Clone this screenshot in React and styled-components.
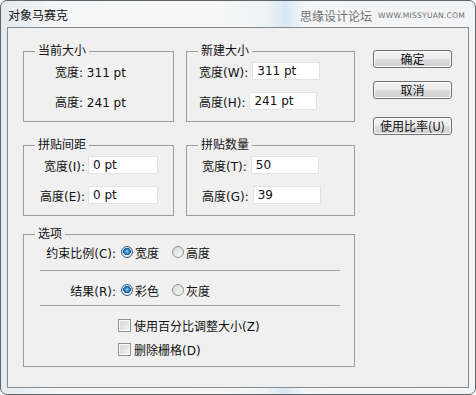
import styled, { createGlobalStyle } from "styled-components"

const Global = createGlobalStyle`
html, body {
    margin:0;
    padding:0;
    background:#ffffff;
}
body {
    font-family: "DejaVu Sans", "Noto Sans CJK SC", sans-serif;
    font-size:12px;
    color:#111;
}
* { box-sizing:border-box; }
`

const Window = styled.div`
width:476px;
height:395px;
border:1px solid #5f6469;
border-radius:7px;
padding:0 6px 6px;
display:flex;
flex-direction:column;
background: linear-gradient(90deg, #e3ebf1 0%, #f5f6f7 12%, #f7f7f7 45%, #eef2f4 56%, #d7e9f6 60%, #f3f5f6 64%, #f1f3f5 100%);
`

const TitleBar = styled.div`
height:26px;
display:flex;
align-items:center;
justify-content:space-between;
padding:0 4px 0 1px;
`

const Title = styled.span`
font-family:"Noto Sans CJK SC", sans-serif;
font-size:12px;
color:#111;
`

const Watermark = styled.div`
display:flex;
align-items:center;
gap:6px;
padding-top:3px;
color:#707070;
`

const WatermarkCn = styled.span`
font-family:"Noto Sans CJK SC", sans-serif;
font-size:12px;
`

const WatermarkEn = styled.span`
font-family:"DejaVu Sans", sans-serif;
font-size:7.6px;
letter-spacing:0.2px;
`

const Client = styled.div`
flex:1;
border:1px solid #85898c;
background:#f0f0f0;
display:flex;
gap:18px;
padding:16px 15px 16px 15px;
`

const Main = styled.div`
width:332px;
display:flex;
flex-direction:column;
gap:11px;
`

const Grid = styled.div`
display:grid;
grid-template-columns:151px 169px;
column-gap:12px;
row-gap:16px;
`

const Group = styled.fieldset`
margin:0;
padding:0;
min-width:0;
border:1px solid #9c9c9c;
`

const Legend = styled.legend`
margin-left:11px;
padding:0 3px;
line-height:14px;
font-size:12px;
`

const GroupBody = styled.div`
display:flex;
flex-direction:column;
gap:10px;
padding:3px 10px 10px ${p => p.$indent}px;
`

const Row = styled.div`
height:20px;
display:flex;
align-items:center;
gap:${p => p.$gap ?? 4}px;
`

const Label = styled.span`
white-space:nowrap;
${p => p.$width && `width:${p.$width}px; text-align:right;`}
`

const Field = styled.input`
width:${p => p.$width}px;
height:18px;
border:1px solid #e2e3e4;
background:#fff;
padding:0 4px;
font-family:"DejaVu Sans", "Noto Sans CJK SC", sans-serif;
font-size:12px;
color:#111;
outline:none;
`

const OptionsBody = styled.div`
display:flex;
flex-direction:column;
padding:1px 14px 7px 14px;
`

const Separator = styled.div`
height:1px;
background:#a3a3a3;
margin:${p => p.$margin};
`

const Choice = styled.label`
display:flex;
align-items:center;
gap:2px;
margin-left:${p => p.$offset}px;
`

const Radio = styled.span`
width:12px;
height:12px;
border-radius:50%;
border:1px solid ${p => p.$on ? "#2f5f8a" : "#8e9194"};
background:${p => p.$on
    ? "radial-gradient(circle at 50% 45%, #9fd4f7 0, #2f86c8 2.2px, #15507f 3.6px, #dfe8ef 4px, #f7f9fb 100%)"
    : "linear-gradient(135deg, #d4d6d8, #f9f9f9)"};
`

const CheckRow = styled.label`
height:20px;
display:flex;
align-items:center;
gap:3px;
padding-left:80px;
margin-top:${p => p.$top}px;
`

const Check = styled.span`
width:13px;
height:13px;
border:1px solid #8e8f8f;
box-shadow: inset 0 0 0 1px #fbfbfb;
background:linear-gradient(135deg, #d2d3d4, #f3f3f3);
`

const Side = styled.div`
width:79px;
display:flex;
flex-direction:column;
padding-top:6px;
`

const Button = styled.button`
height:18px;
width:79px;
margin-top:${p => p.$top}px;
border:1px solid #6f7275;
border-radius:3px;
padding:0;
font-family:"Noto Sans CJK SC", "DejaVu Sans", sans-serif;
font-size:12px;
line-height:14px;
color:#111;
background:linear-gradient(#f4f4f4 0%, #ececec 48%, #dcdcdc 52%, #d0d0d0 100%);
box-shadow: inset 0 0 0 1px #fafafa;
`

const App = () => {
    return (
        <>
            <Global />
            <Window>
                <TitleBar>
                    <Title>对象马赛克</Title>
                    <Watermark>
                        <WatermarkCn>思缘设计论坛</WatermarkCn>
                        <WatermarkEn>WWW.MISSYUAN.COM</WatermarkEn>
                    </Watermark>
                </TitleBar>

                <Client>
                    <Main>
                        <Grid>
                            <Group>
                                <Legend>当前大小</Legend>
                                <GroupBody $indent={31}>
                                    <Row>宽度: 311 pt</Row>
                                    <Row>高度: 241 pt</Row>
                                </GroupBody>
                            </Group>

                            <Group>
                                <Legend>新建大小</Legend>
                                <GroupBody $indent={12}>
                                    <Row>
                                        <Label>宽度(W):</Label>
                                        <Field $width={68} readOnly value="311 pt" />
                                    </Row>
                                    <Row>
                                        <Label>高度(H):</Label>
                                        <Field $width={68} readOnly value="241 pt" />
                                    </Row>
                                </GroupBody>
                            </Group>

                            <Group>
                                <Legend>拼贴间距</Legend>
                                <GroupBody $indent={13}>
                                    <Row $gap={3}>
                                        <Label $width={48}>宽度(I):</Label>
                                        <Field $width={70} readOnly value="0 pt" />
                                    </Row>
                                    <Row $gap={3}>
                                        <Label $width={48}>高度(E):</Label>
                                        <Field $width={70} readOnly value="0 pt" />
                                    </Row>
                                </GroupBody>
                            </Group>

                            <Group>
                                <Legend>拼贴数量</Legend>
                                <GroupBody $indent={15}>
                                    <Row>
                                        <Label>宽度(T):</Label>
                                        <Field $width={68} readOnly value="50" />
                                    </Row>
                                    <Row>
                                        <Label>高度(G):</Label>
                                        <Field $width={68} readOnly value="39" />
                                    </Row>
                                </GroupBody>
                            </Group>
                        </Grid>

                        <Group>
                            <Legend>选项</Legend>
                            <OptionsBody>
                                <Row $gap={0}>
                                    <Label $width={78}>约束比例(C):</Label>
                                    <Choice $offset={5}><Radio $on />宽度</Choice>
                                    <Choice $offset={13}><Radio />高度</Choice>
                                </Row>
                                <Separator $margin="8px 0 9px 2px" />
                                <Row $gap={0}>
                                    <Label $width={78}>结果(R):</Label>
                                    <Choice $offset={5}><Radio $on />彩色</Choice>
                                    <Choice $offset={13}><Radio />灰度</Choice>
                                </Row>
                                <Separator $margin="5px 0 0 2px" />
                                <CheckRow $top={9}><Check />使用百分比调整大小(Z)</CheckRow>
                                <CheckRow $top={4}><Check />删除栅格(D)</CheckRow>
                            </OptionsBody>
                        </Group>
                    </Main>

                    <Side>
                        <Button $top={0}>确定</Button>
                        <Button $top={13}>取消</Button>
                        <Button $top={18}>使用比率(U)</Button>
                    </Side>
                </Client>
            </Window>
        </>
    )
}

export default App
